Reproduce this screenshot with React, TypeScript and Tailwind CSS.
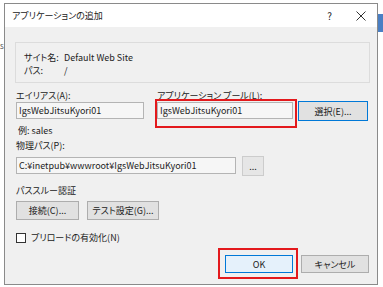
import React from "react";

const FONT = {
  fontFamily: '"Noto Sans CJK JP", "Noto Sans", sans-serif',
  fontFeatureSettings: '"palt"',
};

function Btn({
  children,
  className = "",
}: {
  children: React.ReactNode;
  className?: string;
}) {
  return (
    <div
      className={
        "flex items-center justify-center border bg-[#e1e1e1] text-[9px] leading-none text-[#222] " +
        className
      }
    >
      {children}
    </div>
  );
}

function Field({ value, className = "" }: { value: string; className?: string }) {
  return (
    <div
      className={
        "flex h-[17px] items-center border border-[#b4b4b4] bg-[#f6f6f6] pl-[2px] text-[9px] leading-none text-[#222] " +
        className
      }
    >
      {value}
    </div>
  );
}

export default function App() {
  return (
    <div
      className="relative h-[287px] w-[383px] overflow-hidden bg-white pl-[4px] pt-[3px]"
      style={FONT}
    >
      {/* bits of the window behind */}
      <div className="absolute right-0 top-[14px] h-[18px] w-[5px] bg-[#4a7fc4]" />
      <div className="absolute left-0 top-[42px] text-[8px] leading-none text-[#555]">s</div>

      <div className="flex h-[282px] w-[374px] flex-col border border-[#8a8a8a] bg-[#f0f0f0]">
        {/* title bar */}
        <div className="flex h-[23px] items-center bg-white pl-[7px] text-[9px] text-[#222]">
          <span>アプリケーションの追加</span>
          <span className="ml-auto text-[10px]">?</span>
          <svg
            className="ml-[24px] mr-[11px]"
            width="10"
            height="10"
            viewBox="0 0 10 10"
            fill="none"
            stroke="#333"
            strokeWidth="1"
          >
            <path d="M0.5 0.5 L9.5 9.5 M9.5 0.5 L0.5 9.5" />
          </svg>
        </div>

        {/* body */}
        <div className="flex flex-1 flex-col pl-[11px] pr-[8px] text-[9px] text-[#222]">
          <div className="-mx-px mt-[15px] h-[41px] border border-[#dcdcdc] pl-[8px] pt-[8px]">
            <div className="flex h-[13px] items-center">
              <span className="w-[40px]">サイト名:</span>
              <span>Default Web Site</span>
            </div>
            <div className="flex h-[13px] items-center">
              <span className="w-[40px]">パス:</span>
              <span>/</span>
            </div>
          </div>

          <div className="mt-[7px] flex h-[12px] items-center">
            <span className="w-[141px]">エイリアス(A):</span>
            <span>アプリケーション プール(L):</span>
          </div>
          <div className="flex h-[17px] items-start">
            <Field value="IgsWebJitsuKyori01" className="w-[128px]" />
            <div className="relative ml-[13px] w-[136px]">
              <Field value="IgsWebJitsuKyori01" className="bg-[#f0f0f0]" />
              <div className="absolute -left-[2px] -top-[3px] h-[29px] w-[142px] border-2 border-[#e3191c]" />
            </div>
            <Btn className="-mt-px ml-[5px] h-[20px] w-[70px] border-[#0078d7]">選択(E)...</Btn>
          </div>

          <div className="mt-[6px] flex h-[12px] items-center pl-[2px]">例: sales</div>

          <div className="mt-[3px] flex h-[12px] items-center">物理パス(P):</div>
          <div className="mt-[5px] flex h-[17px] items-start">
            <Field value="C:¥inetpub¥wwwroot¥IgsWebJitsuKyori01" className="w-[220px]" />
            <Btn className="-mt-px ml-[6px] h-[20px] w-[22px] border-[#cccccc] bg-[#e6e6e6] text-[#9a9a9a]">
              ...
            </Btn>
          </div>

          <div className="mt-[11px] flex h-[12px] items-center">パススルー認証</div>
          <div className="mt-[4px] flex">
            <Btn className="h-[19px] w-[63px] border-[#adadad]">接続(C)...</Btn>
            <Btn className="ml-[8px] h-[19px] w-[72px] border-[#adadad]">テスト設定(G)...</Btn>
          </div>

          <div className="mt-[12px] flex h-[12px] items-center">
            <div className="h-[10px] w-[10px] border border-[#333] bg-white" />
            <span className="ml-[5px]">プリロードの有効化(N)</span>
          </div>

          <div className="mt-[11px] flex justify-end">
            <div className="relative">
              <Btn className="h-[18px] w-[68px] border-[#0078d7] bg-[#e5f1fb]">OK</Btn>
              <div className="absolute -left-[7px] -top-[7px] h-[31px] w-[80px] border-2 border-[#e3191c]" />
            </div>
            <Btn className="ml-[8px] h-[18px] w-[68px] border-[#adadad]">キャンセル</Btn>
          </div>
        </div>
      </div>
    </div>
  );
}
